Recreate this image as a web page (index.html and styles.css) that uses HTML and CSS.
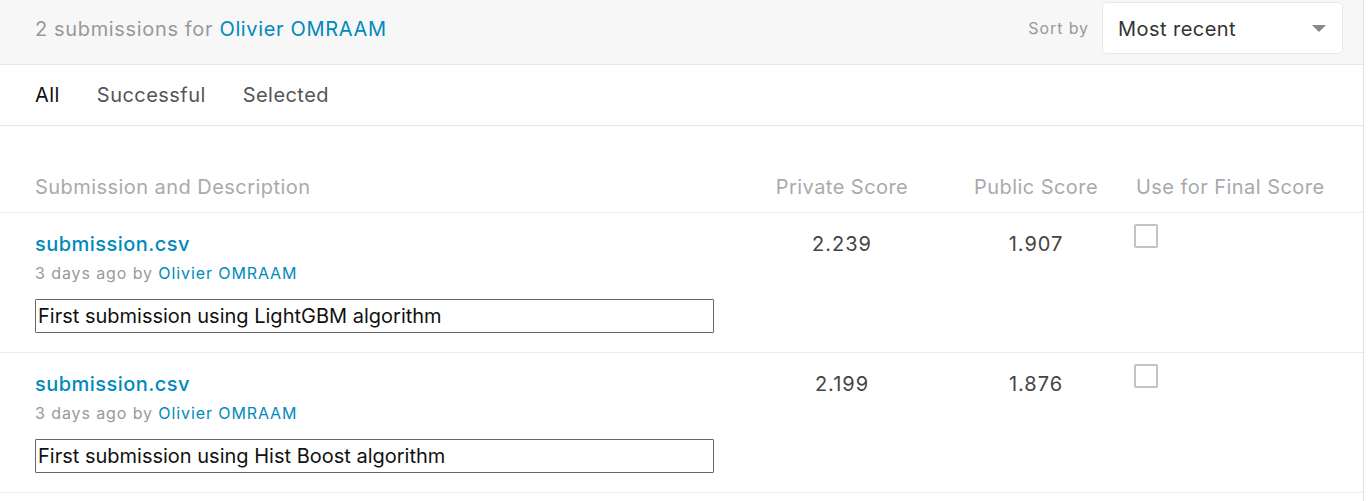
FILE: index.html
```html
<!DOCTYPE html>
<html>
<head>
<meta charset="utf-8">
<link rel="stylesheet" href="styles.css">
</head>
<body>
<div class="panel">
  <div class="topbar">
    <div class="title"><span class="count">2 submissions for</span> <a class="link">Olivier OMRAAM</a></div>
    <div class="sort">
      <span class="sort-label">Sort by</span>
      <div class="select">
        <span>Most recent</span>
        <span class="caret"></span>
      </div>
    </div>
  </div>
  <div class="tabs">
    <span class="tab active">All</span>
    <span class="tab">Successful</span>
    <span class="tab">Selected</span>
  </div>
  <div class="table">
    <div class="row head">
      <div class="c-desc">Submission and Description</div>
      <div class="c-score">Private Score</div>
      <div class="c-score">Public Score</div>
      <div class="c-final">Use for Final Score</div>
    </div>
    <div class="row item">
      <div class="c-desc">
        <a class="file">submission.csv</a>
        <div class="meta">3 days ago by <a class="link">Olivier OMRAAM</a></div>
        <input class="desc" type="text" value="First submission using LightGBM algorithm">
      </div>
      <div class="c-score val">2.239</div>
      <div class="c-score val">1.907</div>
      <div class="c-final"><span class="check"></span></div>
    </div>
    <div class="row item">
      <div class="c-desc">
        <a class="file">submission.csv</a>
        <div class="meta">3 days ago by <a class="link">Olivier OMRAAM</a></div>
        <input class="desc" type="text" value="First submission using Hist Boost algorithm">
      </div>
      <div class="c-score val">2.199</div>
      <div class="c-score val">1.876</div>
      <div class="c-final"><span class="check"></span></div>
    </div>
  </div>
</div>
</body>
</html>
```
FILE: styles.css
```css
html, body {
  margin: 0;
  padding: 0;
  background: #fff;
  font-family: Inter, "Noto Sans", sans-serif;
  letter-spacing: 0.45px;
}
.panel {
  width: 1363px;
  border-right: 1px solid #e3e3e3;
  min-height: 501px;
}
.link {
  color: #008abc;
  text-decoration: none;
}
.topbar {
  height: 64px;
  background: #f7f7f7;
  border-bottom: 1px solid #e6e6e6;
  display: flex;
  align-items: center;
  justify-content: space-between;
  padding: 0 20px 0 35px;
  box-sizing: content-box;
}
.title {
  font-size: 20px;
  margin-top: -6px;
  letter-spacing: 0.65px;
}
.count {
  color: #999;
}
.sort {
  display: flex;
  align-items: center;
  gap: 13px;
  margin-top: -8px;
}
.sort-label {
  font-size: 16px;
  color: #999;
  letter-spacing: 0.9px;
}
.select {
  width: 208px;
  height: 50px;
  box-sizing: content-box;
  background: #fff;
  border: 1px solid #e8e8e8;
  border-radius: 5px;
  display: flex;
  align-items: center;
  justify-content: space-between;
  padding: 0 16px 0 15px;
  font-size: 20px;
  color: #333;
}
.select span:first-child {
  padding-top: 2px;
}
.caret {
  width: 0;
  height: 0;
  border-left: 7px solid transparent;
  border-right: 7px solid transparent;
  border-top: 7px solid #888;
}
.tabs {
  height: 60px;
  border-bottom: 1px solid #e6e6e6;
  display: flex;
  align-items: center;
  gap: 37px;
  padding-left: 35px;
}
.tab {
  font-size: 20px;
  color: #555;
}
.tab.active {
  color: #111;
}
.table {
  padding-top: 49px;
}
.row {
  display: grid;
  grid-template-columns: 706px 202px 186px 1fr;
  padding-left: 35px;
  border-bottom: 1px solid #ebebeb;
}
.head {
  height: 37px;
  align-items: start;
  font-size: 20px;
  color: #aaa;
}
.c-score {
  text-align: center;
}
.c-final {
  padding-left: 7px;
}
.item {
  height: 139px;
  align-items: start;
}
.item .c-desc {
  padding-top: 17px;
}
.file {
  display: block;
  font-size: 20px;
  font-weight: 500;
  color: #008abc;
  line-height: 28px;
}
.meta {
  font-size: 16px;
  color: #999;
  line-height: 20px;
  margin-top: 5px;
  letter-spacing: 0.9px;
}
.desc {
  display: block;
  margin-top: 16px;
  width: 679px;
  height: 34px;
  box-sizing: border-box;
  border: 1px solid #666;
  border-radius: 1px;
  padding: 0 2px;
  font-family: Inter, "Noto Sans", sans-serif;
  font-size: 20px;
  letter-spacing: 0;
  color: #111;
  background: #fff;
}
.val {
  padding-top: 17px;
  font-size: 20px;
  line-height: 28px;
  color: #444;
  letter-spacing: 1px;
}
.item .c-final {
  padding-top: 11px;
  padding-left: 5px;
}
.check {
  display: block;
  width: 20px;
  height: 20px;
  border: 2px solid #c0c3c7;
  border-radius: 2px;
}
```
